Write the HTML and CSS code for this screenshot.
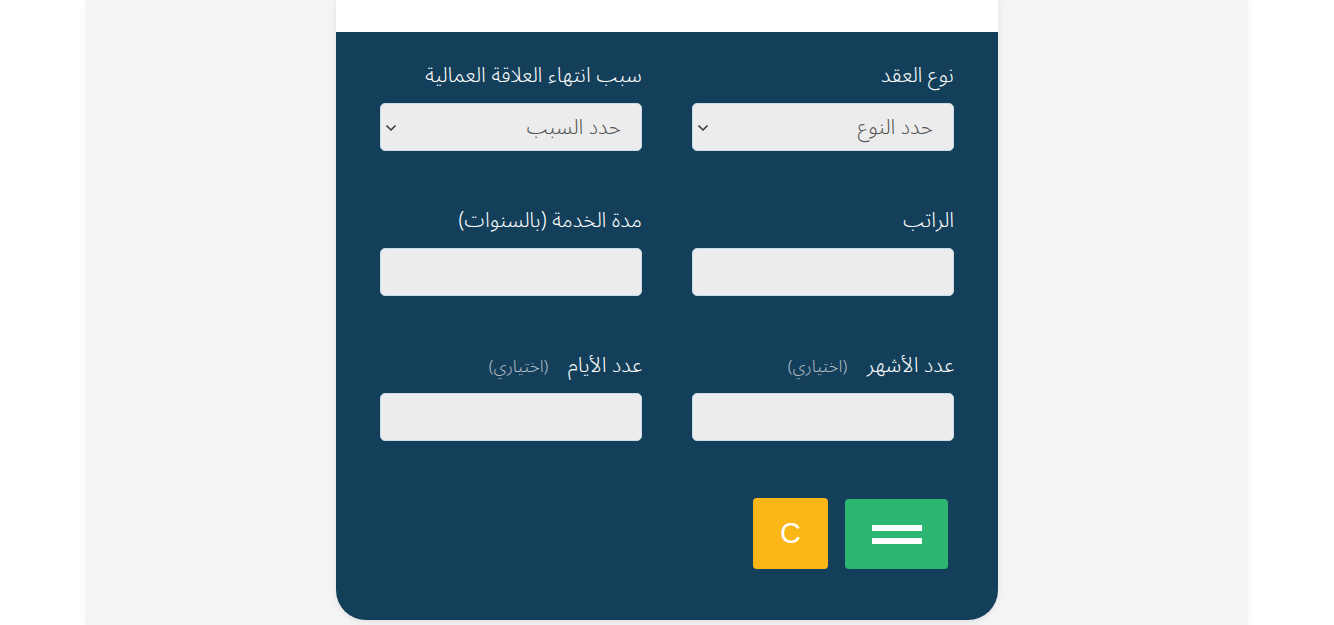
FILE: index.html
```html
<!DOCTYPE html>
<html lang="ar" dir="rtl">
<head>
  <meta charset="UTF-8">
  <meta name="viewport" content="width=device-width, initial-scale=1.0">
  <title>حاسبة نهاية الخدمة</title>
  <link rel="stylesheet" href="styles.css">
</head>
<body>
  <div class="page">
    <div class="calc-card">
      <div class="calc-head"></div>

      <form class="calc-form" id="calcForm">
        <div class="field">
          <label for="contract">نوع العقد</label>
          <div class="select-wrap">
            <select id="contract" name="contract">
              <option>حدد النوع</option>
            </select>
            <svg class="chevron" width="12" height="8" viewBox="0 0 12 8"><path d="M1.5 1.5 L6 6 L10.5 1.5" fill="none" stroke="#333" stroke-width="1.5"/></svg>
          </div>
        </div>

        <div class="field">
          <label for="reason">سبب انتهاء العلاقة العمالية</label>
          <div class="select-wrap">
            <select id="reason" name="reason">
              <option>حدد السبب</option>
            </select>
            <svg class="chevron" width="12" height="8" viewBox="0 0 12 8"><path d="M1.5 1.5 L6 6 L10.5 1.5" fill="none" stroke="#333" stroke-width="1.5"/></svg>
          </div>
        </div>

        <div class="field">
          <label for="salary">الراتب</label>
          <input type="text" id="salary" name="salary">
        </div>

        <div class="field">
          <label for="years">مدة الخدمة (بالسنوات)</label>
          <input type="text" id="years" name="years">
        </div>

        <div class="field">
          <label for="months">عدد الأشهر <span class="optional">(اختياري)</span></label>
          <input type="text" id="months" name="months">
        </div>

        <div class="field">
          <label for="days">عدد الأيام <span class="optional">(اختياري)</span></label>
          <input type="text" id="days" name="days">
        </div>

        <div class="actions">
          <button type="submit" class="btn btn-equal" aria-label="احسب">
            <span class="bar"></span>
            <span class="bar"></span>
          </button>
          <button type="reset" class="btn btn-clear">C</button>
        </div>
      </form>
    </div>
  </div>
</body>
</html>
```

FILE: styles.css
```css
/* Reset */
body, form, input, select, button, label {
    margin: 0;
    padding: 0;
    box-sizing: border-box;
}

body {
    background: #ffffff;
    font-family: "Noto Sans Arabic", "DejaVu Sans", sans-serif;
}

/* Grey page column */
.page {
    width: 1162px;
    min-height: 625px;
    margin: 0 auto;
    background: #f4f4f4;
    box-shadow: 0 0 8px rgba(0, 0, 0, 0.06);
}

/* Calculator card */
.calc-card {
    width: 662px;
    margin: 0 auto;
    border-radius: 0 0 30px 30px;
    box-shadow: 0 2px 6px rgba(0, 0, 0, 0.08);
}

.calc-head {
    height: 32px;
    background: #ffffff;
}

.calc-form {
    display: grid;
    grid-template-columns: 262px 262px;
    column-gap: 50px;
    row-gap: 54px;
    padding: 28px 44px 51px;
    background: #143f5a;
    border-radius: 0 0 30px 30px;
}

.field {
    display: flex;
    flex-direction: column;
    gap: 13px;
}

.field label {
    display: block;
    height: 30px;
    line-height: 30px;
    font-size: 21px;
    font-weight: 300;
    color: #ffffff;
}

.optional {
    margin-right: 14px;
    font-size: 17px;
    color: #b4bcc4;
}

/* Inputs and selects */
.field input,
.field select {
    width: 100%;
    height: 48px;
    border: 1px solid #c9dbe6;
    border-radius: 5px;
    background: #ececec;
    font-family: inherit;
    font-size: 21px;
    font-weight: 300;
    color: #555;
}

.field select {
    padding: 0 20px 0 30px;
    appearance: none;
    -webkit-appearance: none;
}

.select-wrap {
    position: relative;
}

.chevron {
    position: absolute;
    left: 5px;
    top: 21px;
    pointer-events: none;
}

/* Buttons */
.actions {
    grid-column: 1 / -1;
    display: flex;
    align-items: flex-start;
    gap: 17px;
    margin-top: 3px;
    padding-right: 6px;
}

.btn {
    border: none;
    border-radius: 4px;
    cursor: pointer;
}

.btn-equal {
    width: 103px;
    height: 70px;
    margin-top: 1px;
    background: #2db572;
    display: flex;
    flex-direction: column;
    align-items: center;
    justify-content: center;
    gap: 7px;
}

.btn-equal .bar {
    width: 50px;
    height: 6px;
    background: #ffffff;
}

.btn-clear {
    width: 75px;
    height: 71px;
    background: #fbb618;
    color: #ffffff;
    font-family: "Liberation Sans", Arial, sans-serif;
    font-size: 29px;
}
```
